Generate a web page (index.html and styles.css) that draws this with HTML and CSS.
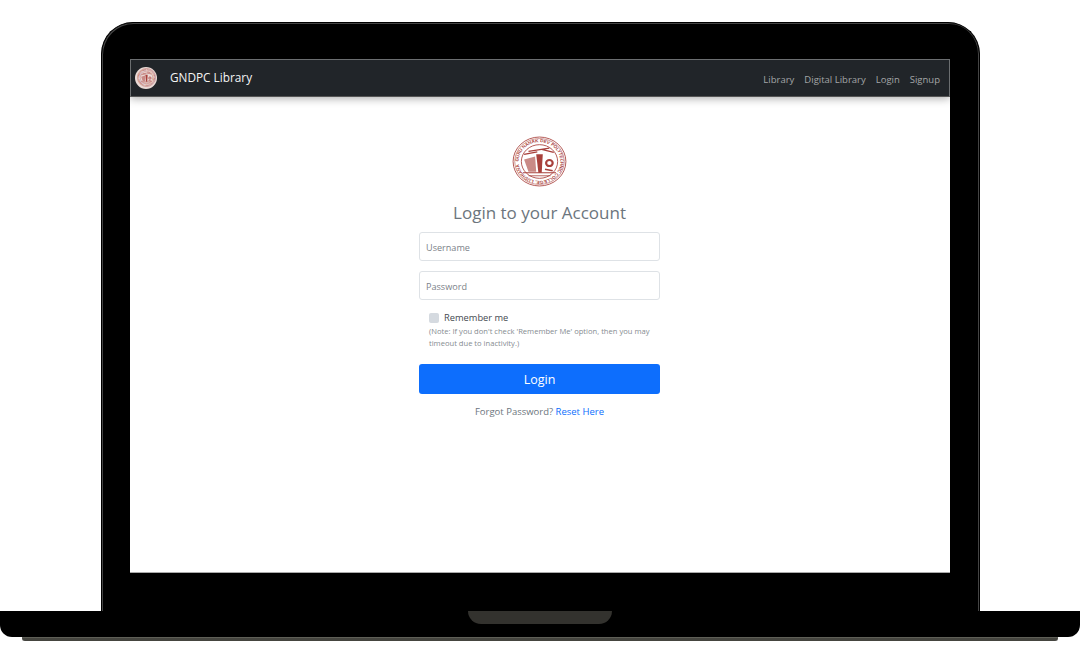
FILE: index.html
```html
<!DOCTYPE html>
<html lang="en">
<head>
    <meta charset="UTF-8"/>
    <title>GNDPC Library</title>
    <link rel="stylesheet" href="styles.css">
</head>

<body>
    <svg class="defs" width="0" height="0">
        <defs>
            <path id="sealArc" d="M50 50 m-38 0 a38 38 0 1 1 76 0 a38 38 0 1 1 -76 0"/>
            <symbol id="seal" viewBox="0 0 100 100" preserveAspectRatio="none">
                <circle cx="50" cy="50" r="48" fill="none" stroke="#a8403b" stroke-width="1.6"/>
                <circle cx="50" cy="50" r="45" fill="none" stroke="#a8403b" stroke-width="1"/>
                <circle cx="50" cy="50" r="33" fill="none" stroke="#a8403b" stroke-width="1.6"/>
                <text font-size="8.5" font-family="Liberation Sans, sans-serif" fill="#a8403b" font-weight="bold">
                    <textPath href="#sealArc">GURU NANAK DEV POLYTECHNIC COLLEGE, LUDHIANA</textPath>
                </text>
                <path d="M22 36 L46 31 M30 30 L68 24 M54 26 L76 32" stroke="#a8403b" stroke-width="2.5" fill="none"/>
                <path d="M22 46 L42 40 L44 70 L30 70 Z" fill="#c98a86"/>
                <path d="M44 36 L56 36 L54 72 L48 72 Z" fill="#a8403b"/>
                <path d="M20 72 H80" stroke="#a8403b" stroke-width="2"/>
                <path d="M30 78 H70" stroke="#a8403b" stroke-width="1.5"/>
                <circle cx="68" cy="53" r="6" fill="none" stroke="#a8403b" stroke-width="4"/>
                <path d="M60 65 L74 68" stroke="#a8403b" stroke-width="3"/>
            </symbol>
        </defs>
    </svg>

    <div class="laptop">
        <main class="screen">
            <nav class="navbar">
                <a class="brand" href="#">
                    <span class="brand-logo">
                        <svg width="19" height="19"><use href="#seal"/></svg>
                    </span>
                    <span class="brand-name">GNDPC Library</span>
                </a>
                <div class="nav-links">
                    <a href="#">Library</a>
                    <a href="#">Digital Library</a>
                    <a href="#">Login</a>
                    <a href="#">Signup</a>
                </div>
            </nav>

            <section class="login">
                <svg class="login-logo" width="55" height="51"><use href="#seal"/></svg>
                <h1>Login to your Account</h1>
                <form class="login-form">
                    <input type="text" placeholder="Username">
                    <input type="password" placeholder="Password">
                    <div class="remember">
                        <label class="remember-row">
                            <span class="checkbox"></span>
                            Remember me
                        </label>
                        <p>(Note: If you don't check 'Remember Me' option, then you may timeout due to inactivity.)</p>
                    </div>
                    <button type="button">Login</button>
                </form>
                <p class="forgot">Forgot Password? <a href="#">Reset Here</a></p>
            </section>
        </main>
    </div>

    <div class="base">
        <div class="notch"></div>
    </div>
    <div class="base-shadow"></div>
</body>
</html>
```

FILE: styles.css
```css
* {
    margin: 0;
    padding: 0;
    box-sizing: border-box;
}

body {
    font-family: 'Open Sans', 'Noto Sans', sans-serif;
    background-color: #fff;
    padding-top: 22px;
    overflow: hidden;
}

.defs {
    display: block;
    height: 0;
}

.laptop {
    width: 879px;
    height: 589px;
    margin-left: 101px;
    padding: 36px 28px 0;
    background-color: #000;
    border: 1px solid #000;
    border-bottom: none;
    border-radius: 32px 32px 0 0;
    box-shadow: inset 1px 1px 0 #444, inset -1px 0 0 #444;
}

.screen {
    width: 820px;
    height: 514px;
    background-color: #fff;
    border-bottom: 1px solid #aaa;
    display: flex;
    flex-direction: column;
}

.navbar {
    height: 38px;
    flex-shrink: 0;
    display: flex;
    justify-content: space-between;
    align-items: center;
    padding: 0 9px 0 4px;
    background-color: #212529;
    border: 1px solid #6b6e70;
    border-bottom-color: #555;
    box-shadow: 0 2px 8px rgba(0, 0, 0, 0.3);
}

.brand {
    display: flex;
    align-items: center;
    gap: 13px;
    color: #f4f4f4;
    font-size: 11.8px;
    margin-top: -1px;
    text-decoration: none;
}

.brand-name {
    margin-bottom: 1px;
}

.brand-logo {
    width: 22px;
    height: 22px;
    border-radius: 50%;
    background-color: #eadad6;
    display: flex;
    justify-content: center;
    align-items: center;
}

.nav-links {
    display: flex;
    gap: 10px;
    margin-top: 2px;
}

.nav-links a {
    color: #a3a5a7;
    font-size: 9.5px;
    text-decoration: none;
}

.login {
    width: 241px;
    margin-left: 289px;
    padding-top: 39px;
    display: flex;
    flex-direction: column;
    align-items: center;
}

.login-logo {
    flex-shrink: 0;
}

.login h1 {
    color: #6c757d;
    font-size: 17px;
    font-weight: 400;
    line-height: 24px;
    margin-top: 14px;
    margin-bottom: 7px;
}

.login-form {
    width: 100%;
    display: flex;
    flex-direction: column;
}

.login-form input {
    width: 100%;
    height: 29px;
    margin-bottom: 10px;
    padding: 1px 6px 0;
    border: 1px solid #dee2e6;
    border-radius: 3px;
    font-family: inherit;
    font-size: 9.1px;
}

.login-form input::placeholder {
    color: #7b8289;
    opacity: 1;
}

.remember {
    padding-left: 10px;
}

.remember-row {
    display: flex;
    align-items: center;
    gap: 5px;
    color: #444a50;
    font-size: 9.3px;
    height: 15px;
}

.checkbox {
    width: 10px;
    height: 10px;
    background-color: #d5dae0;
    border-radius: 2px;
}

.remember p {
    color: #858b90;
    font-size: 7.6px;
    line-height: 12px;
}

.login-form button {
    height: 30px;
    margin-top: 15px;
    background-color: #0d6efd;
    color: #fff;
    border: none;
    border-radius: 3px;
    font-family: inherit;
    font-size: 12.5px;
}

.forgot {
    color: #6c757d;
    font-size: 9.5px;
    margin-top: 11px;
}

.forgot a {
    color: #0d6efd;
    text-decoration: none;
}

.base {
    height: 26px;
    background-color: #000;
    border-radius: 0 0 12px 12px;
    display: flex;
    justify-content: center;
}

.notch {
    width: 144px;
    height: 13px;
    background-color: #33322e;
    border-radius: 0 0 14px 14px;
}

.base-shadow {
    height: 4px;
    margin: 0 22px;
    background-color: #45453f;
    border-top: 1px solid #5f5f57;
    border-radius: 0 0 3px 3px;
    box-shadow: 0 1px 0 #ddd;
}
```
